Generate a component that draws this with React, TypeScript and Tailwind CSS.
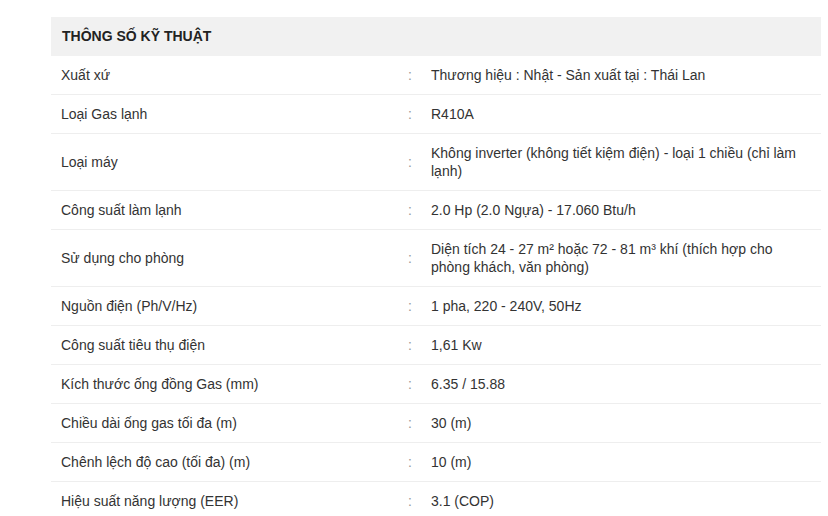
const specs: [string, string][] = [
    ["Xuất xứ", "Thương hiệu : Nhật - Sản xuất tại : Thái Lan"],
    ["Loại Gas lạnh", "R410A"],
    ["Loại máy", "Không inverter (không tiết kiệm điện) - loại 1 chiều (chỉ làm lạnh)"],
    ["Công suất làm lạnh", "2.0 Hp (2.0 Ngựa) - 17.060 Btu/h"],
    ["Sử dụng cho phòng", "Diện tích 24 - 27 m² hoặc 72 - 81 m³ khí (thích hợp cho phòng khách, văn phòng)"],
    ["Nguồn điện (Ph/V/Hz)", "1 pha, 220 - 240V, 50Hz"],
    ["Công suất tiêu thụ điện", "1,61 Kw"],
    ["Kích thước ống đồng Gas (mm)", "6.35 / 15.88"],
    ["Chiều dài ống gas tối đa (m)", "30 (m)"],
    ["Chênh lệch độ cao (tối đa) (m)", "10 (m)"],
    ["Hiệu suất năng lượng (EER)", "3.1 (COP)"],
]

export default function App() {
    return (
        <div className="w-[828px] h-[516px] overflow-hidden bg-white font-['Liberation_Sans',Arial,sans-serif] text-[14px] text-[#333]">
            <div className="ml-[51px] mt-[17px] w-[770px]">
                {/* tiêu đề bảng */}
                <div className="h-[39px] bg-[#f1f1f1] pl-[11px] flex items-center font-bold text-[#222]">
                    THÔNG SỐ KỸ THUẬT
                </div>

                {specs.map(([label, value]) => (
                    <div key={label} className="grid grid-cols-[357px_23px_1fr] border-b border-[#eeeeee] leading-[18px]">
                        <div className="pl-[10px] py-[10px] flex items-center">{label}</div>
                        <div className="py-[10px] flex items-center text-[#999]">:</div>
                        <div className="py-[10px] pr-[10px]">{value}</div>
                    </div>
                ))}
            </div>
        </div>
    )
}
